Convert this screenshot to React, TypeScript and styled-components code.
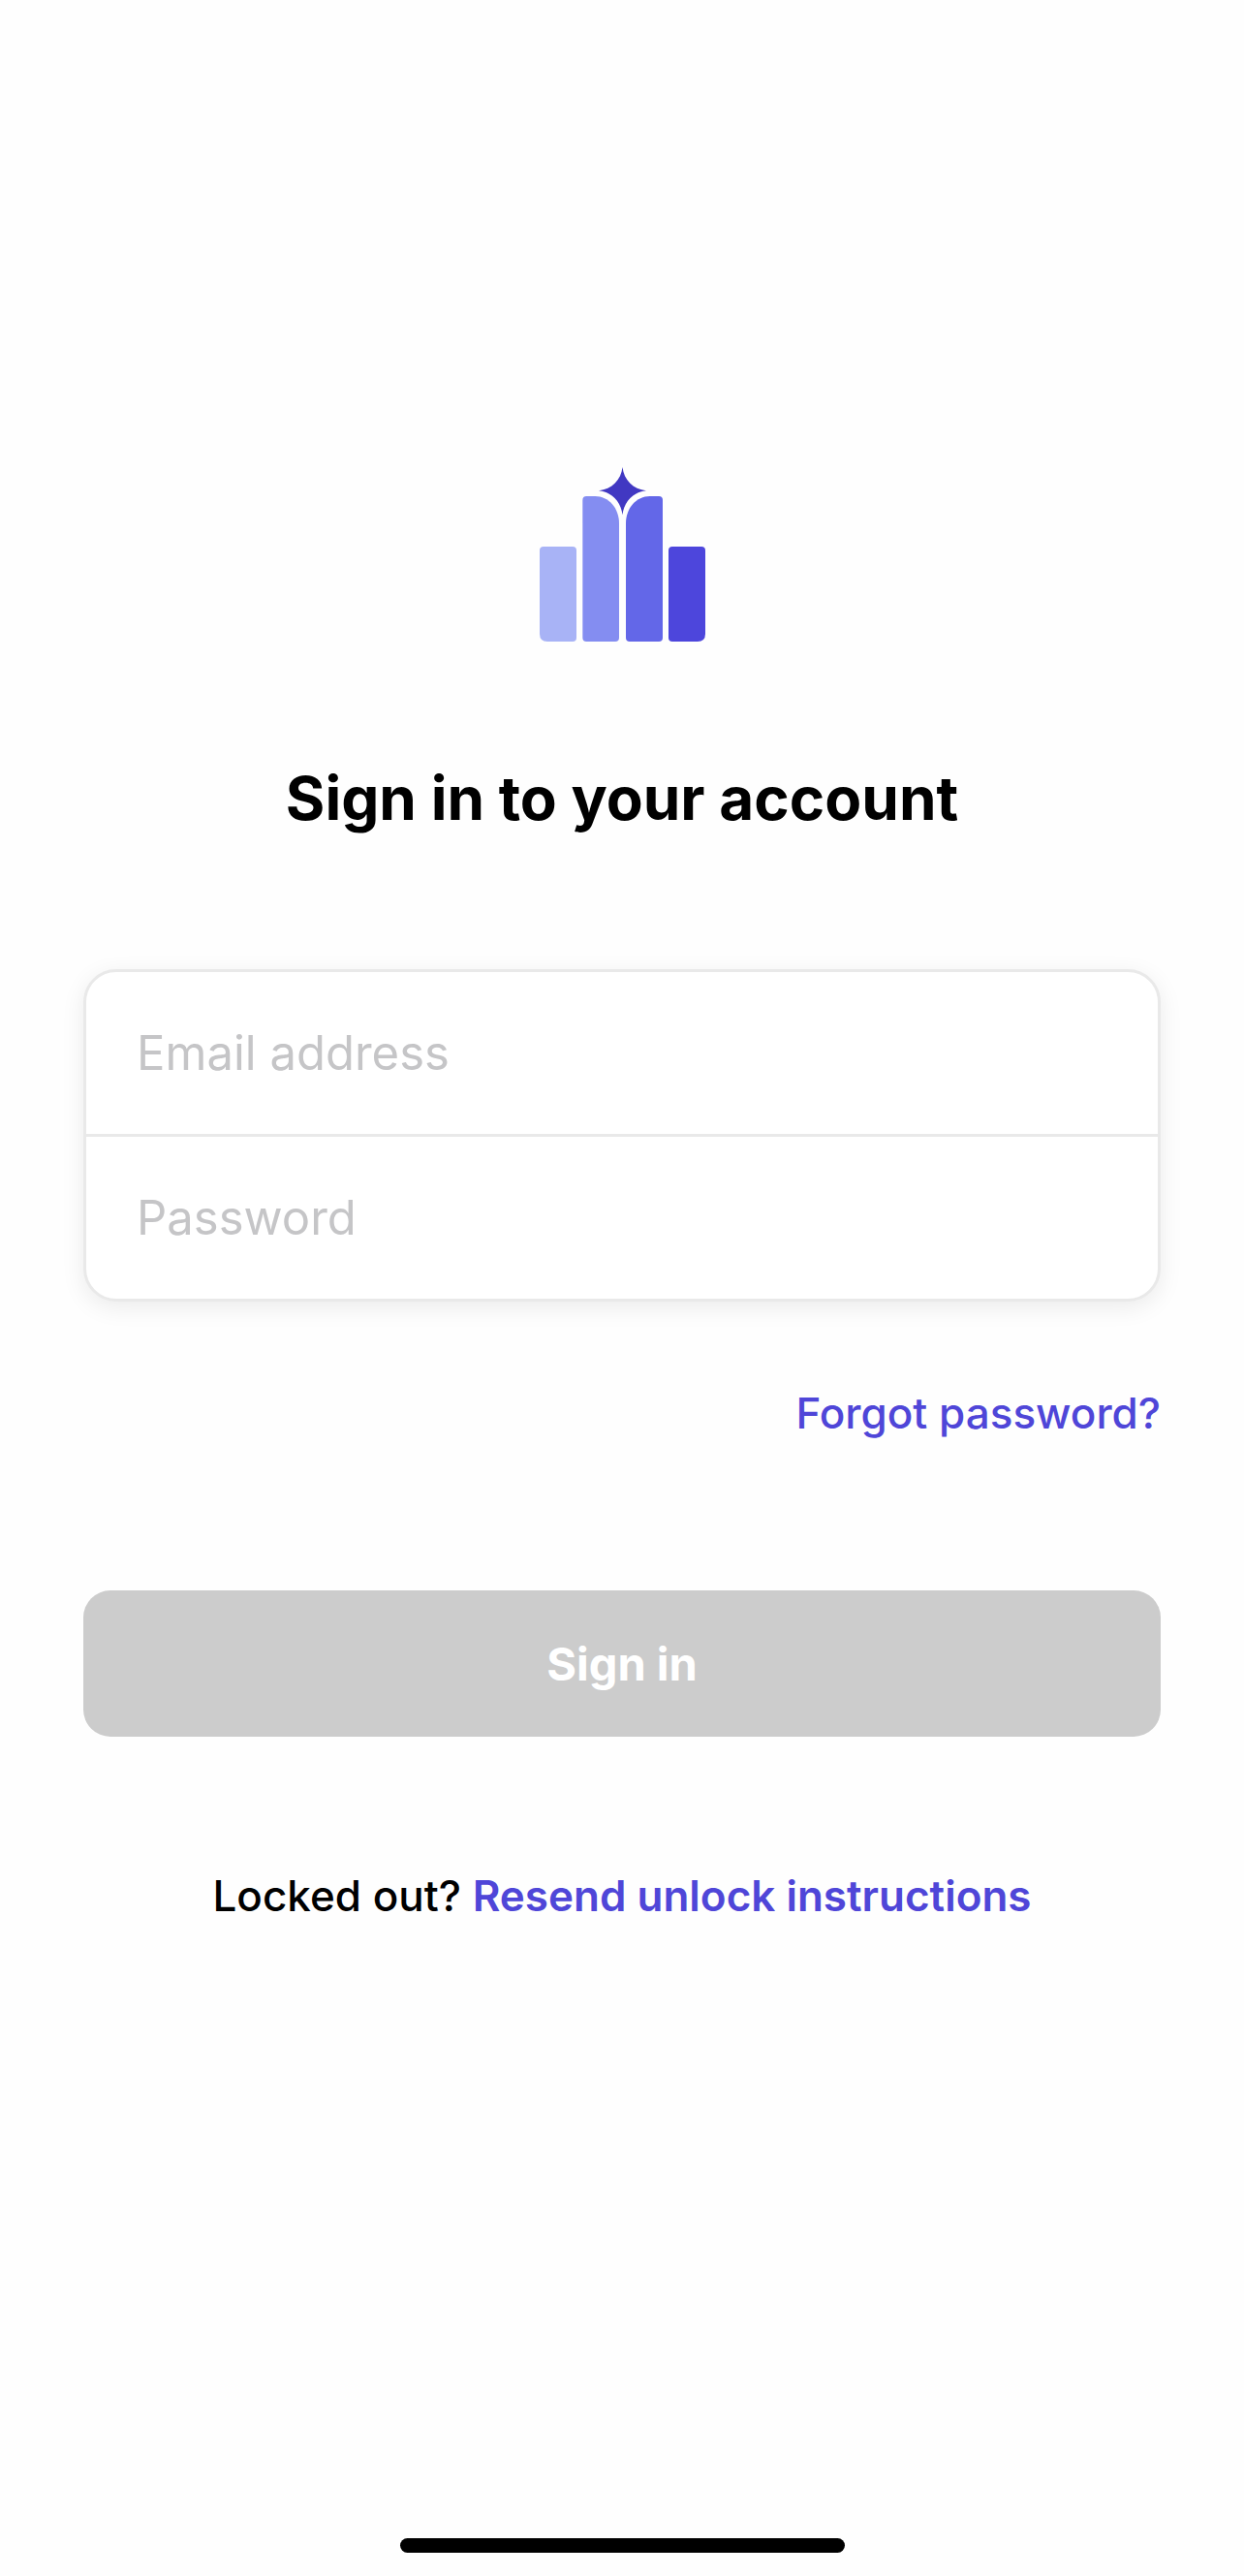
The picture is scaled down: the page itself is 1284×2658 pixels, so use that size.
import React, { useState } from "react";
import styled, { createGlobalStyle } from "styled-components";

const accent = "#4f46d8";

const GlobalStyle = createGlobalStyle`
  *, *::before, *::after { box-sizing: border-box; }
  body {
    margin: 0;
    background: #fefefe;
    color: #000;
    font-family: Inter, "Liberation Sans", sans-serif;
  }
`;

const Screen = styled.div`
  display: flex;
  flex-direction: column;
  align-items: center;
  min-height: 100vh;
  padding: 482px 86px 24px;
`;

const Content = styled.main`
  display: flex;
  flex-direction: column;
  align-items: center;
  width: 100%;
`;

const Logo = styled.svg`
  display: block;
  width: 171px;
  height: 180px;
`;

const Title = styled.h1`
  margin: 122px 0 136px;
  font-size: 62px;
  line-height: 80px;
  font-weight: 700;
  text-align: center;
`;

const Form = styled.form`
  display: flex;
  flex-direction: column;
  width: 100%;
`;

const FieldGroup = styled.div`
  display: flex;
  flex-direction: column;
  border: 3px solid #e9e9e9;
  border-radius: 34px;
  background: #fff;
  overflow: hidden;
  box-shadow: 0 6px 24px rgba(0, 0, 0, 0.08);
`;

const Field = styled.div`
  display: flex;
  & + & { border-top: 3px solid #e9e9e9; }
`;

const Input = styled.input`
  flex: 1;
  min-width: 0;
  height: 167px;
  padding: 0 52px;
  border: 0;
  outline: 0;
  background: transparent;
  color: #000;
  font-family: inherit;
  font-size: 49px;
  &::placeholder { color: #c5c5c7; opacity: 1; }
`;

const Link = styled.a<{ $strong?: boolean }>`
  color: ${accent};
  font-weight: ${(p) => (p.$strong ? 600 : 500)};
  text-decoration: none;
`;

const ForgotRow = styled.div`
  margin: 85px 0 153px;
  font-size: 44px;
  line-height: 60px;
  text-align: right;
`;

const SubmitButton = styled.button`
  width: 100%;
  height: 151px;
  padding: 0;
  border: 0;
  border-radius: 28px;
  background: ${accent};
  color: #fff;
  font-family: inherit;
  font-size: 47px;
  font-weight: 700;
  &:disabled { background: #ccc; }
`;

const Footnote = styled.p`
  margin: 134px 0 0;
  font-size: 44px;
  font-weight: 500;
  line-height: 60px;
  text-align: center;
`;

const HomeIndicator = styled.div`
  width: 459px;
  max-width: 60%;
  height: 15px;
  margin-top: auto;
  border-radius: 8px;
  background: #000;
`;

function BrandMark() {
  return (
    <Logo viewBox="45 36 513 540" role="img" aria-label="Logo">
      <path fill="#a8b3f6" d="M57 282H147Q159 282 159 294V564Q159 576 147 576H69Q45 576 45 552V294Q45 282 57 282Z" />
      <path fill="#848df1" d="M190 126H217C258 126 291 162 291 210V564Q291 576 279 576H190Q178 576 178 564V138Q178 126 190 126Z" />
      <path fill="#6367e8" d="M414 126H386C345 126 312 162 312 210V564Q312 576 324 576H414Q426 576 426 564V138Q426 126 414 126Z" />
      <path fill="#4d46dc" d="M456 282H546Q558 282 558 294V552Q558 576 534 576H456Q444 576 444 564V294Q444 282 456 282Z" />
      <path fill="#4138c2" d="M301.500 36C306 76 334 104 375 109C334 114 306 143 301.500 184C297 143 269 114 228 109C269 104 297 76 301.500 36Z" />
    </Logo>
  );
}

export default function App() {
  const [email, setEmail] = useState("");
  const [password, setPassword] = useState("");

  return (
    <>
      <GlobalStyle />
      <Screen>
        <Content>
          <BrandMark />
          <Title>Sign in to your account</Title>
          <Form onSubmit={(e) => e.preventDefault()}>
            <FieldGroup>
              <Field>
                <Input type="email" aria-label="Email address" placeholder="Email address" value={email} onChange={(e) => setEmail(e.target.value)} />
              </Field>
              <Field>
                <Input type="password" aria-label="Password" placeholder="Password" value={password} onChange={(e) => setPassword(e.target.value)} />
              </Field>
            </FieldGroup>
            <ForgotRow>
              <Link href="#forgot">Forgot password?</Link>
            </ForgotRow>
            <SubmitButton type="submit" disabled={!email || !password}>Sign in</SubmitButton>
          </Form>
          <Footnote>
            Locked out? <Link $strong href="#unlock">Resend unlock instructions</Link>
          </Footnote>
        </Content>
        <HomeIndicator />
      </Screen>
    </>
  );
}
